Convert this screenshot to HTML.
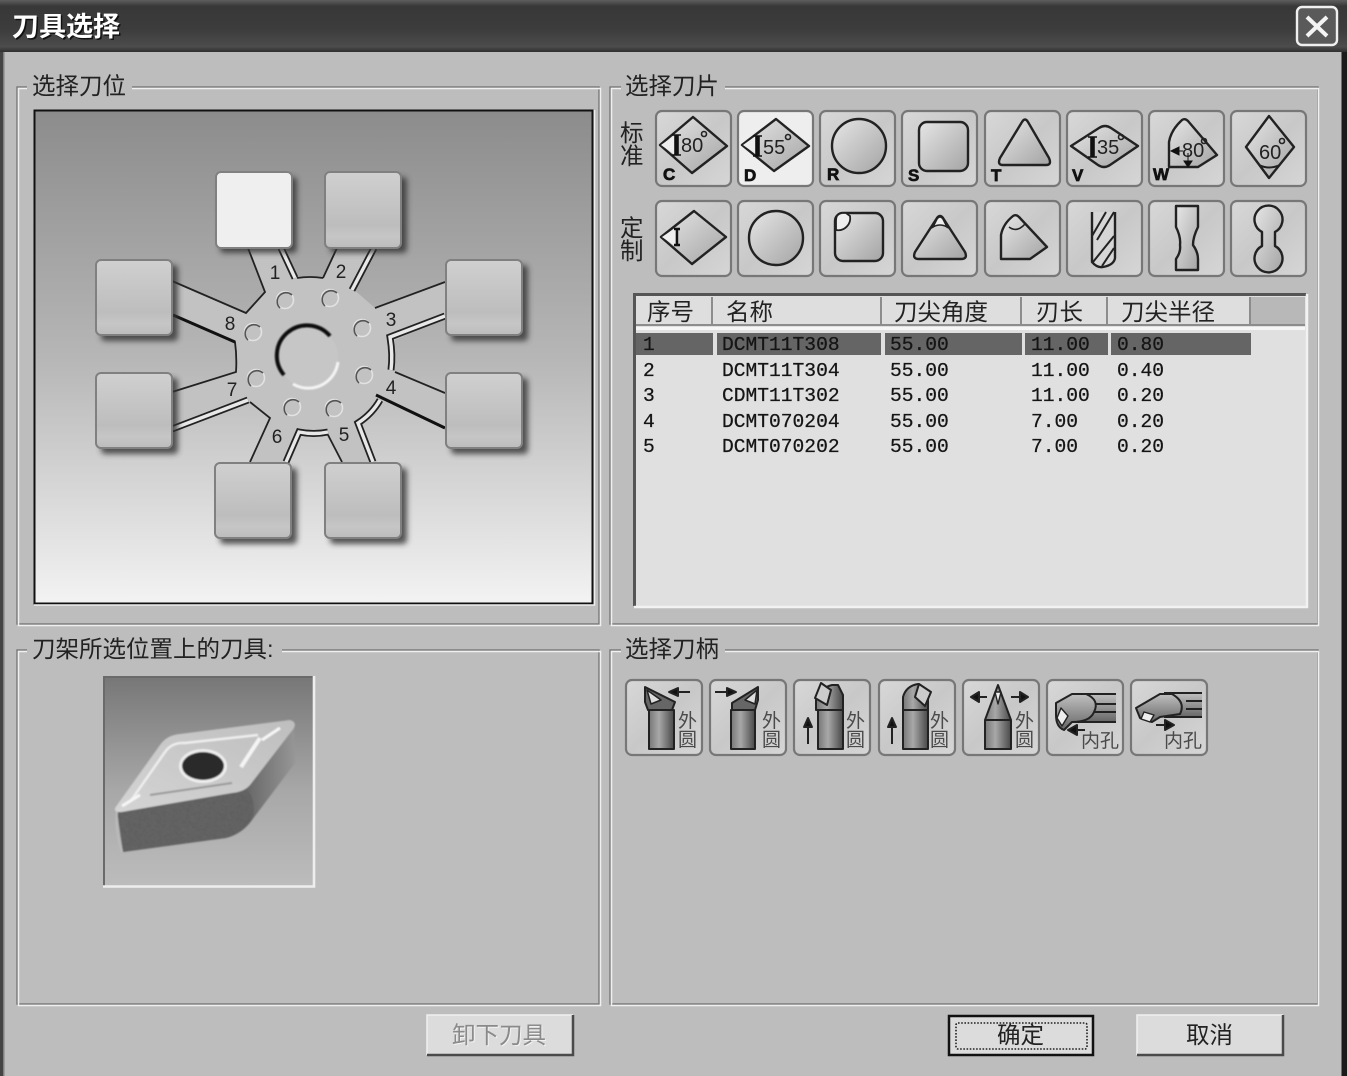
<!DOCTYPE html>
<html><head><meta charset="utf-8"><style>
html,body{margin:0;padding:0;background:#bdbdbd;width:1347px;height:1076px;overflow:hidden}
svg{display:block;filter:blur(.35px)}
text{font-family:"Liberation Sans","Noto Sans CJK SC",sans-serif;fill:#222}
.l{font-size:23.5px}
.m{font-family:"Liberation Mono","Noto Sans CJK SC",monospace;font-size:19.6px;fill:#151515;stroke:#151515;stroke-width:.25}
.s{fill:url(#sh);stroke:#222;stroke-width:2.4;stroke-linejoin:round}
.n{fill:none;stroke:#222;stroke-width:2;stroke-linejoin:round}
.t{font-size:20px;fill:#222}
.k{font-size:17px;font-weight:bold;fill:#111;stroke:#111;stroke-width:.7}
.h{font-size:19px;fill:#4a4a4a}
.arm{fill:none;stroke:#222;stroke-width:7}
.armi{fill:none;stroke:#e8e8e8;stroke-width:3.4}
</style></head><body>
<svg width="1347" height="1076" viewBox="0 0 1347 1076" xmlns="http://www.w3.org/2000/svg">
<defs>
<linearGradient id="tb" x1="0" y1="0" x2="0" y2="1"><stop offset="0" stop-color="#5e5e5e"/><stop offset=".12" stop-color="#383838"/><stop offset=".55" stop-color="#3c3c3c"/><stop offset=".9" stop-color="#4c4c4c"/><stop offset="1" stop-color="#2e2e2e"/></linearGradient>
<linearGradient id="pan" x1="0" y1="0" x2="0" y2="1"><stop offset="0" stop-color="#8c8c8c"/><stop offset=".5" stop-color="#b6b6b6"/><stop offset="1" stop-color="#f3f3f3"/></linearGradient>
<linearGradient id="tile" x1="0" y1="0" x2="0" y2="1"><stop offset="0" stop-color="#d0d0d0"/><stop offset=".7" stop-color="#bdbdbd"/><stop offset=".85" stop-color="#c6c6c6"/><stop offset="1" stop-color="#bcbcbc"/></linearGradient>
<linearGradient id="btn" x1="0" y1="0" x2="1" y2="1"><stop offset="0" stop-color="#d8d8d8"/><stop offset=".5" stop-color="#c8c8c8"/><stop offset="1" stop-color="#d6d6d6"/></linearGradient>
<linearGradient id="sh" x1="0" y1="0" x2="1" y2="1"><stop offset="0" stop-color="#e6e6e6"/><stop offset="1" stop-color="#a4a4a4"/></linearGradient>
<linearGradient id="bar" x1="0" y1="0" x2="1" y2="0"><stop offset="0" stop-color="#777"/><stop offset=".4" stop-color="#a8a8a8"/><stop offset="1" stop-color="#484848"/></linearGradient>
<linearGradient id="barh" x1="0" y1="0" x2="0" y2="1"><stop offset="0" stop-color="#c0c0c0"/><stop offset="1" stop-color="#666"/></linearGradient>
<linearGradient id="img" x1="0" y1="0" x2="0" y2="1"><stop offset="0" stop-color="#777"/><stop offset=".55" stop-color="#a8a8a8"/><stop offset="1" stop-color="#bcbcbc"/></linearGradient>
<linearGradient id="top" x1="0" y1="1" x2="1" y2="0"><stop offset="0" stop-color="#d4d4d4"/><stop offset="1" stop-color="#bebebe"/></linearGradient>
<linearGradient id="rf" x1="0" y1="0" x2="1" y2="0"><stop offset="0" stop-color="#666"/><stop offset="1" stop-color="#969696"/></linearGradient>
<filter id="blur" x="-30%" y="-30%" width="160%" height="160%"><feGaussianBlur stdDeviation="3"/></filter>
<filter id="b1" x="-20%" y="-20%" width="140%" height="140%"><feGaussianBlur stdDeviation=".9"/></filter>
<filter id="noise" x="0" y="0" width="100%" height="100%"><feTurbulence baseFrequency=".8" numOctaves="2" seed="3"/><feColorMatrix values="0 0 0 0 .3 0 0 0 0 .3 0 0 0 0 .3 0 0 0 .4 0"/><feComposite in2="SourceGraphic" operator="in"/><feMerge><feMergeNode in="SourceGraphic"/><feMergeNode/></feMerge></filter>
<g id="ib"><path d="M0 -9h3v18h-3zM-3 -10h9M-3 10h9" fill="#111" stroke="#111" stroke-width="1.6"/></g>
</defs>

<rect width="1347" height="1076" fill="#bdbdbd"/>
<rect x="0" y="0" width="3" height="1076" fill="#444"/><rect x="3" y="0" width="1.5" height="1076" fill="#808080"/>
<rect x="1341.5" y="0" width="5.5" height="1076" fill="#1a1a1a"/>
<rect width="1347" height="52" fill="url(#tb)"/>
<text x="12" y="36" font-size="27" font-weight="bold" style="fill:#111" transform="translate(1.5 1.5)">刀具选择</text>
<text x="12" y="36" font-size="27" font-weight="bold" style="fill:#fff">刀具选择</text>
<rect x="1297" y="7" width="40" height="38" rx="5" fill="#5a5a5a" stroke="#efefef" stroke-width="2.4"/>
<path d="M1307 17l20 19M1327 17l-20 19" stroke="#f4f4f4" stroke-width="4" fill="none"/>

<!-- group frames -->
<g fill="none">
<rect x="17" y="87" width="582" height="537" stroke="#777" stroke-width="1.4"/><rect x="18.5" y="88.5" width="582" height="537" stroke="#f0f0f0" stroke-width="1.5"/>
<rect x="610" y="87" width="708" height="537" stroke="#777" stroke-width="1.4"/><rect x="611.5" y="88.5" width="707" height="537" stroke="#f0f0f0" stroke-width="1.5"/>
<rect x="17" y="650" width="582" height="354" stroke="#777" stroke-width="1.4"/><rect x="18.5" y="651.5" width="582" height="354" stroke="#f0f0f0" stroke-width="1.5"/>
<rect x="610" y="650" width="708" height="354" stroke="#777" stroke-width="1.4"/><rect x="611.5" y="651.5" width="707" height="354" stroke="#f0f0f0" stroke-width="1.5"/>
</g>
<rect x="27" y="78" width="105" height="16" fill="#bdbdbd"/><rect x="621" y="78" width="104" height="16" fill="#bdbdbd"/>
<rect x="27" y="640" width="255" height="16" fill="#bdbdbd"/><rect x="621" y="640" width="104" height="16" fill="#bdbdbd"/>
<text class="l" x="32" y="94">选择刀位</text>
<text class="l" x="625" y="94">选择刀片</text>
<text class="l" x="32" y="657">刀架所选位置上的刀具:</text>
<text class="l" x="625" y="657">选择刀柄</text>

<!-- turret panel -->
<rect x="34.5" y="110.5" width="558" height="493" fill="url(#pan)" stroke="#111" stroke-width="2"/>
<path d="M594.5 110V605H34" fill="none" stroke="#eee" stroke-width="1.5"/>

<path d="M248 248L265 292L246 313L172 281V315L235 342Q237 357 236 372L172 392V432L250 402L270 418L250 462H290L302 435H328L342 462H377L357 423L382 402L445 428V393L395 372V340L445 318V282L375 308L352 288L378 248H337L323 278Q310 276 297 278L283 248Z" fill="#c2c2c2"/>
<path d="M248 248L265 292L246 313L172 281M173 315L235 342Q237 357 236 372L172 392M250 402L270 418L250 462M342 462L328 435M323 278L337 248M297 278Q310 276 323 278M375 308L445 282M445 393L395 372" fill="none" stroke="#222" stroke-width="1.8"/>
<path d="M173 315L235 342M376 395L445 428" stroke="#111" stroke-width="3" fill="none"/>
<path d="M352 290L374 248" class="arm"/><path d="M352 290L374 248" class="armi"/>
<path d="M281 248L295 278" class="arm"/><path d="M281 248L295 278" class="armi"/>
<path d="M445 316L390 337Q393 355 391 370" class="arm"/><path d="M445 316L390 337Q393 355 391 370" class="armi"/>
<path d="M172 429L248 400" class="arm"/><path d="M172 429L248 400" class="armi"/>
<path d="M380 400Q372 414 358 423L373 462" class="arm"/><path d="M380 400Q372 414 358 423L373 462" class="armi"/>
<path d="M286 462L299 432Q314 435 328 432" class="arm"/><path d="M286 462L299 432Q314 435 328 432" class="armi"/>

<g fill="none">
<g stroke-width="1.6">
<circle cx="285" cy="300" r="8.5" stroke="#e2e2e2"/><path d="M280 308A8.5 8.5 0 0 1 292 295" stroke="#555"/>
<circle cx="330" cy="298" r="8.5" stroke="#e2e2e2"/><path d="M325 306A8.5 8.5 0 0 1 337 293" stroke="#555"/>
<circle cx="362" cy="328" r="8.5" stroke="#e2e2e2"/><path d="M357 336A8.5 8.5 0 0 1 369 323" stroke="#555"/>
<circle cx="364" cy="375" r="8.5" stroke="#e2e2e2"/><path d="M359 383A8.5 8.5 0 0 1 371 370" stroke="#555"/>
<circle cx="334" cy="408" r="8.5" stroke="#e2e2e2"/><path d="M329 416A8.5 8.5 0 0 1 341 403" stroke="#555"/>
<circle cx="292" cy="407" r="8.5" stroke="#e2e2e2"/><path d="M287 415A8.5 8.5 0 0 1 299 402" stroke="#555"/>
<circle cx="256" cy="378" r="8.5" stroke="#e2e2e2"/><path d="M251 386A8.5 8.5 0 0 1 263 373" stroke="#555"/>
<circle cx="253" cy="332" r="8.5" stroke="#e2e2e2"/><path d="M248 340A8.5 8.5 0 0 1 260 327" stroke="#555"/>
</g>
<circle cx="308" cy="357" r="30" fill="#c6c6c6"/>
<path d="M284 375A30 30 0 0 1 330 336" stroke="#111" stroke-width="4" filter="url(#b1)"/>
<path d="M293 384A30 30 0 0 0 338 362" stroke="#f4f4f4" stroke-width="3" filter="url(#b1)"/>
</g>
<g font-size="19">
<text x="275" y="279" text-anchor="middle">1</text><text x="341" y="278" text-anchor="middle">2</text><text x="391" y="326" text-anchor="middle">3</text><text x="391" y="394" text-anchor="middle">4</text><text x="344" y="441" text-anchor="middle">5</text><text x="277" y="443" text-anchor="middle">6</text><text x="232" y="396" text-anchor="middle">7</text><text x="230" y="330" text-anchor="middle">8</text>
</g>

<g filter="url(#blur)" fill="#333" opacity=".8">
<rect x="220" y="177" width="77" height="76" rx="4"/><rect x="330" y="177" width="77" height="76" rx="4"/>
<rect x="101" y="265" width="77" height="76" rx="4"/><rect x="101" y="378" width="77" height="76" rx="4"/>
<rect x="451" y="265" width="77" height="76" rx="4"/><rect x="451" y="378" width="77" height="76" rx="4"/>
<rect x="220" y="468" width="77" height="76" rx="4"/><rect x="330" y="468" width="77" height="76" rx="4"/>
</g>
<g stroke="#808080" stroke-width="2" fill="url(#tile)">
<rect x="216" y="172" width="76" height="76" rx="5" fill="#efefef"/><rect x="325" y="172" width="76" height="76" rx="5"/>
<rect x="96" y="260" width="76" height="75" rx="5"/><rect x="96" y="373" width="76" height="75" rx="5"/>
<rect x="446" y="260" width="76" height="75" rx="5"/><rect x="446" y="373" width="76" height="75" rx="5"/>
<rect x="215" y="463" width="76" height="75" rx="5"/><rect x="325" y="463" width="76" height="75" rx="5"/>
</g>

<!-- side labels -->
<text class="l" x="620" y="141">标</text><text class="l" x="620" y="164">准</text><text class="l" x="620" y="236">定</text><text class="l" x="620" y="259">制</text>

<!-- insert buttons -->
<g stroke="#777" stroke-width="2.2" fill="url(#btn)">
<rect x="656" y="111" width="75" height="75" rx="6"/><rect x="738" y="111" width="75" height="75" rx="6" fill="#eeeeee"/><rect x="820" y="111" width="75" height="75" rx="6"/><rect x="902" y="111" width="75" height="75" rx="6"/><rect x="985" y="111" width="75" height="75" rx="6"/><rect x="1067" y="111" width="75" height="75" rx="6"/><rect x="1149" y="111" width="75" height="75" rx="6"/><rect x="1231" y="111" width="75" height="75" rx="6"/>
<rect x="656" y="201" width="75" height="75" rx="6"/><rect x="738" y="201" width="75" height="75" rx="6"/><rect x="820" y="201" width="75" height="75" rx="6"/><rect x="902" y="201" width="75" height="75" rx="6"/><rect x="985" y="201" width="75" height="75" rx="6"/><rect x="1067" y="201" width="75" height="75" rx="6"/><rect x="1149" y="201" width="75" height="75" rx="6"/><rect x="1231" y="201" width="75" height="75" rx="6"/>
</g>
<!-- row 1 -->
<path class="s" d="M660 145L693 117L727 146L692 173Z"/><path d="M661 145L675 135V155Z" fill="#eee"/><use href="#ib" x="675" y="145"/>
<text class="t" x="681" y="152" font-size="21">80</text><circle cx="704" cy="134" r="2.5" fill="none" stroke="#222" stroke-width="1.6"/>
<path class="s" d="M742 145L776 119L809 146L774 171Z"/><path d="M743 145L757 135V155Z" fill="#eee"/><use href="#ib" x="756" y="146"/>
<text class="t" x="763" y="154">55</text><circle cx="788" cy="137" r="2.5" fill="none" stroke="#222" stroke-width="1.6"/>
<circle class="s" cx="859" cy="146" r="27"/>
<rect class="s" x="919" y="122" width="49" height="49" rx="8"/>
<path class="s" d="M1022 122Q1025 117 1028 122L1049 158Q1052 165 1046 165H1003Q997 165 1000 158Z"/>
<path class="s" d="M1071 146L1099 128Q1105 124 1111 128L1138 146L1110 165Q1104 169 1098 165Z"/><use href="#ib" x="1091" y="147"/>
<text class="t" x="1097" y="154">35</text><circle cx="1121" cy="137" r="2.5" fill="none" stroke="#222" stroke-width="1.6"/>
<path class="s" d="M1182 120Q1185 118 1188 121L1217 155L1198 167H1169V142Q1171 130 1182 120Z"/>
<text class="t" x="1182" y="157">80</text><circle cx="1204" cy="141" r="2.5" fill="none" stroke="#222" stroke-width="1.6"/><path d="M1171 151l8 -4v8zM1179 151h4M1184 161h8l-4 6zM1188 153v8" fill="#111" stroke="#111"/>
<path class="s" d="M1269 116L1294 147L1269 178L1246 147Z"/>
<text class="t" x="1259" y="159">60</text><circle cx="1282" cy="141" r="2.5" fill="none" stroke="#222" stroke-width="1.6"/><path d="M1259 165Q1269 170 1280 165" fill="none" stroke="#222" stroke-width="2"/>
<text class="k" x="663" y="180">C</text><text class="k" x="744" y="181">D</text><text class="k" x="827" y="180">R</text><text class="k" x="908" y="181">S</text><text class="k" x="991" y="181">T</text><text class="k" x="1072" y="181">V</text><text class="k" x="1153" y="180">W</text>
<!-- row 2 -->
<path class="s" d="M661 237L694 211L726 237L692 264Z"/><path d="M662 237L675 228V246Z" fill="#eee"/><path d="M677 230v14M674 229h6M674 245h6" stroke="#111" stroke-width="2.4" fill="none"/>
<circle class="s" cx="776" cy="238" r="27"/>
<rect class="s" x="835" y="213" width="48" height="48" rx="8"/><path d="M836 230A12 12 0 0 0 850 216L846 213H842Q836 214 836 220Z" fill="#eee" stroke="#222" stroke-width="1.8"/>
<path class="s" d="M937 218Q940 214 943 218L965 252Q968 259 961 259H919Q912 259 915 252Z"/><path d="M933 227Q940 223 947 227L943 219Q940 215 937 219Z" fill="#eee" stroke="#222" stroke-width="1.6"/>
<path class="s" d="M1013 216Q1016 214 1019 217L1047 247L1030 259H1001V235Q1003 224 1013 216Z"/><path d="M1009 227Q1017 233 1025 224" fill="none" stroke="#222" stroke-width="1.6"/>
<path class="s" d="M1092 212V262Q1097 268 1103 267Q1114 265 1115 258V212" style="fill:#d6d6d6"/>
<path class="n" d="M1114 212L1097 240M1106 212L1092 236M1114 236L1093 262M1114 248L1102 266"/>
<path class="s" d="M1176 206H1198V227Q1193 237 1193 245Q1198 252 1198 259V270H1176V259Q1181 252 1180 245Q1181 237 1176 227Z"/>
<path class="s" d="M1262 232A14 14 0 1 1 1275 232V246A14 14 0 1 1 1262 246Z"/>

<!-- table -->
<rect x="634" y="294" width="673" height="313" fill="#e0e0e0"/>
<path d="M634.5 606V294.5H1306" fill="none" stroke="#555" stroke-width="3"/>
<path d="M1307 294V607H634" fill="none" stroke="#f2f2f2" stroke-width="2.5"/>
<g fill="#dedede"><rect x="636" y="297" width="75" height="27"/><rect x="714" y="297" width="166" height="27"/><rect x="883" y="297" width="137" height="27"/><rect x="1023" y="297" width="83" height="27"/><rect x="1109" y="297" width="140" height="27"/></g>
<rect x="1251" y="297" width="54" height="27" fill="#b8b8b8"/>
<g fill="#8c8c8c"><rect x="711" y="297" width="2" height="28"/><rect x="880" y="297" width="2" height="28"/><rect x="1020" y="297" width="2" height="28"/><rect x="1106" y="297" width="2" height="28"/><rect x="1249" y="297" width="2" height="28"/><rect x="636" y="324" width="669" height="2"/></g>
<rect x="636" y="327" width="669" height="3" fill="#f6f6f6"/>
<g fill="#656565"><rect x="636" y="333" width="77" height="22"/><rect x="717" y="333" width="164" height="22"/><rect x="885" y="333" width="137" height="22"/><rect x="1025" y="333" width="83" height="22"/><rect x="1111" y="333" width="140" height="22"/></g>
<text class="l" x="647" y="320">序号</text><text class="l" x="726" y="320">名称</text><text class="l" x="894" y="320">刀尖角度</text><text class="l" x="1036" y="320">刃长</text><text class="l" x="1121" y="320">刀尖半径</text>
<g>
<text class="m" x="643" y="350">1</text><text class="m" x="722" y="350">DCMT11T308</text><text class="m" x="890" y="350">55.00</text><text class="m" x="1031" y="350">11.00</text><text class="m" x="1117" y="350">0.80</text>
<text class="m" x="643" y="376">2</text><text class="m" x="722" y="376">DCMT11T304</text><text class="m" x="890" y="376">55.00</text><text class="m" x="1031" y="376">11.00</text><text class="m" x="1117" y="376">0.40</text>
<text class="m" x="643" y="401">3</text><text class="m" x="722" y="401">CDMT11T302</text><text class="m" x="890" y="401">55.00</text><text class="m" x="1031" y="401">11.00</text><text class="m" x="1117" y="401">0.20</text>
<text class="m" x="643" y="427">4</text><text class="m" x="722" y="427">DCMT070204</text><text class="m" x="890" y="427">55.00</text><text class="m" x="1031" y="427">7.00</text><text class="m" x="1117" y="427">0.20</text>
<text class="m" x="643" y="452">5</text><text class="m" x="722" y="452">DCMT070202</text><text class="m" x="890" y="452">55.00</text><text class="m" x="1031" y="452">7.00</text><text class="m" x="1117" y="452">0.20</text>
</g>

<!-- insert photo -->
<rect x="104" y="677" width="209" height="209" fill="url(#img)"/>
<path d="M104 886V677H313" fill="none" stroke="#6a6a6a" stroke-width="2"/>
<path d="M103 886.5H314V676" fill="none" stroke="#eee" stroke-width="2.6"/>
<g filter="url(#b1)">
<path d="M245 788L294 725L295 763L252 820Q254 800 245 788Z" fill="url(#rf)"/>
<path d="M117 811L123 852L226 838Q242 834 252 820Q258 800 245 788L117 810Z" fill="#5a5a5a" filter="url(#noise)"/>
<path d="M117 811Q115 830 122 852" stroke="#bbb" stroke-width="2" fill="none"/>
<path d="M115 808L160 745Q167 735 180 734L290 720Q297 722 294 728L250 785Q244 792 232 793L122 812Q114 813 115 808Z" fill="url(#top)"/>
<path d="M130 802L165 752Q172 742 185 743L258 735" fill="none" stroke="#eee" stroke-width="2.4"/>
<path d="M260 738L241 767" stroke="#f4f4f4" stroke-width="4" fill="none"/>
<path d="M150 795L232 783" fill="none" stroke="#999" stroke-width="2"/>
<path d="M122 806L140 795M262 740L280 728" stroke="#f6f6f6" stroke-width="3" fill="none"/>
<ellipse cx="203" cy="766" rx="24" ry="17" fill="#eee"/><ellipse cx="203" cy="766" rx="21" ry="14" fill="#2c2c2c"/>
</g>

<!-- holder buttons -->
<g stroke="#777" stroke-width="2.2" fill="url(#btn)">
<rect x="626" y="680" width="76" height="75" rx="6"/><rect x="710" y="680" width="76" height="75" rx="6"/><rect x="794" y="680" width="76" height="75" rx="6"/><rect x="879" y="680" width="76" height="75" rx="6"/><rect x="963" y="680" width="76" height="75" rx="6"/><rect x="1047" y="680" width="76" height="75" rx="6"/><rect x="1131" y="680" width="76" height="75" rx="6"/>
</g>
<g stroke="#222" stroke-width="2" stroke-linejoin="round">
<!-- 1 -->
<rect x="649" y="710" width="25" height="39" fill="url(#bar)"/><path d="M645 687L675 702L672 710H648L645 702Z" fill="#666"/><path d="M647 690L661 700L651 704Z" fill="#ddd" stroke-width="1.5"/><path d="M676 692H690" fill="none"/><path d="M669 692l9 -4v8z" fill="#111"/>
<!-- 2 -->
<rect x="731" y="710" width="24" height="39" fill="url(#bar)"/><path d="M758 687L732 703V710H755L758 700Z" fill="#666"/><path d="M757 690L745 700L755 704Z" fill="#ddd" stroke-width="1.5"/><path d="M715 692H729" fill="none"/><path d="M736 692l-9 -4v8z" fill="#111"/>
<!-- 3 -->
<rect x="818" y="710" width="25" height="39" fill="url(#bar)"/><path d="M816 710V700Q820 688 832 685H838L843 695V710Z" fill="url(#bar)"/><path d="M821 683L831 690L827 705L815 698Z" fill="#ccc"/><path d="M808 744V726" fill="none"/><path d="M808 718l-4 9h8z" fill="#111"/>
<!-- 4 -->
<rect x="903" y="710" width="25" height="39" fill="url(#bar)"/><path d="M903 710V697Q906 686 918 684L928 695V710Z" fill="url(#bar)"/><path d="M919 684L931 692L925 706L915 697Z" fill="#ccc"/><path d="M892 744V726" fill="none"/><path d="M892 718l-4 9h8z" fill="#111"/>
<!-- 5 -->
<path d="M998 685L1011 720V749H985V720Z" fill="url(#bar)"/><path d="M985 720H1011" fill="none"/><path d="M995 692h6l-3 12z" fill="#eee" stroke-width="1.4"/><path d="M976 697h11M1011 697h11" fill="none"/><path d="M971 697l8 -5v10zM1028 697l-8 -5v10z" fill="#111"/>
<!-- 6 -->
<rect x="1072" y="694" width="44" height="28" fill="url(#barh)" stroke="none"/><path d="M1072 694H1116M1072 722H1116M1092 704H1116M1092 712H1116" fill="none"/><path d="M1056 703L1072 694H1086Q1100 700 1094 712Q1090 722 1072 722L1064 730Q1056 727 1056 715Z" fill="url(#barh)"/><path d="M1061 708L1068 716L1062 726L1057 718Z" fill="#eee" stroke-width="1.4"/><path d="M1076 730H1085" fill="none"/><path d="M1068 730l9 -5v10z" fill="#111"/>
<!-- 7 -->
<rect x="1164" y="693" width="38" height="24" fill="url(#barh)" stroke="none"/><path d="M1164 693H1202M1164 717H1202M1186 701H1202M1186 709H1202" fill="none"/><path d="M1136 708L1160 694H1172Q1186 702 1180 714L1160 717L1152 722L1140 718Z" fill="url(#barh)"/><path d="M1144 712L1154 715L1150 722L1141 719Z" fill="#eee" stroke-width="1.4"/><path d="M1156 725H1166" fill="none"/><path d="M1174 725l-9 -5v10z" fill="#111"/>
</g>
<text class="h" x="678" y="727">外</text><text class="h" x="678" y="746">圆</text>
<text class="h" x="762" y="727">外</text><text class="h" x="762" y="746">圆</text>
<text class="h" x="846" y="727">外</text><text class="h" x="846" y="746">圆</text>
<text class="h" x="930" y="727">外</text><text class="h" x="930" y="746">圆</text>
<text class="h" x="1015" y="727">外</text><text class="h" x="1015" y="746">圆</text>
<text class="h" x="1081" y="747">内孔</text><text class="h" x="1164" y="747">内孔</text>

<!-- bottom buttons -->
<rect x="427" y="1015" width="146" height="40" fill="#dcdcdc"/><path d="M427 1055V1015H573" fill="none" stroke="#f0f0f0" stroke-width="1.5"/><path d="M427 1055H573V1015" fill="none" stroke="#4a4a4a" stroke-width="2.5"/>
<text x="452" y="1043" font-size="23.5" style="fill:#f2f2f2" transform="translate(1 1)">卸下刀具</text><text x="452" y="1043" font-size="23.5" style="fill:#8a8a8a">卸下刀具</text>
<rect x="949" y="1016" width="144" height="39" fill="#dcdcdc" stroke="#111" stroke-width="2.5"/>
<rect x="956" y="1023" width="131" height="26" rx="2" fill="none" stroke="#222" stroke-width="1.6" stroke-dasharray="1.6 1.6"/>
<text x="997" y="1043" font-size="23.5">确定</text>
<rect x="1137" y="1015" width="146" height="40" fill="#dcdcdc"/><path d="M1137 1055V1015H1283" fill="none" stroke="#f0f0f0" stroke-width="1.5"/><path d="M1137 1055H1283V1015" fill="none" stroke="#4a4a4a" stroke-width="2.5"/>
<text x="1186" y="1043" font-size="23.5">取消</text>
</svg>
</body></html>
